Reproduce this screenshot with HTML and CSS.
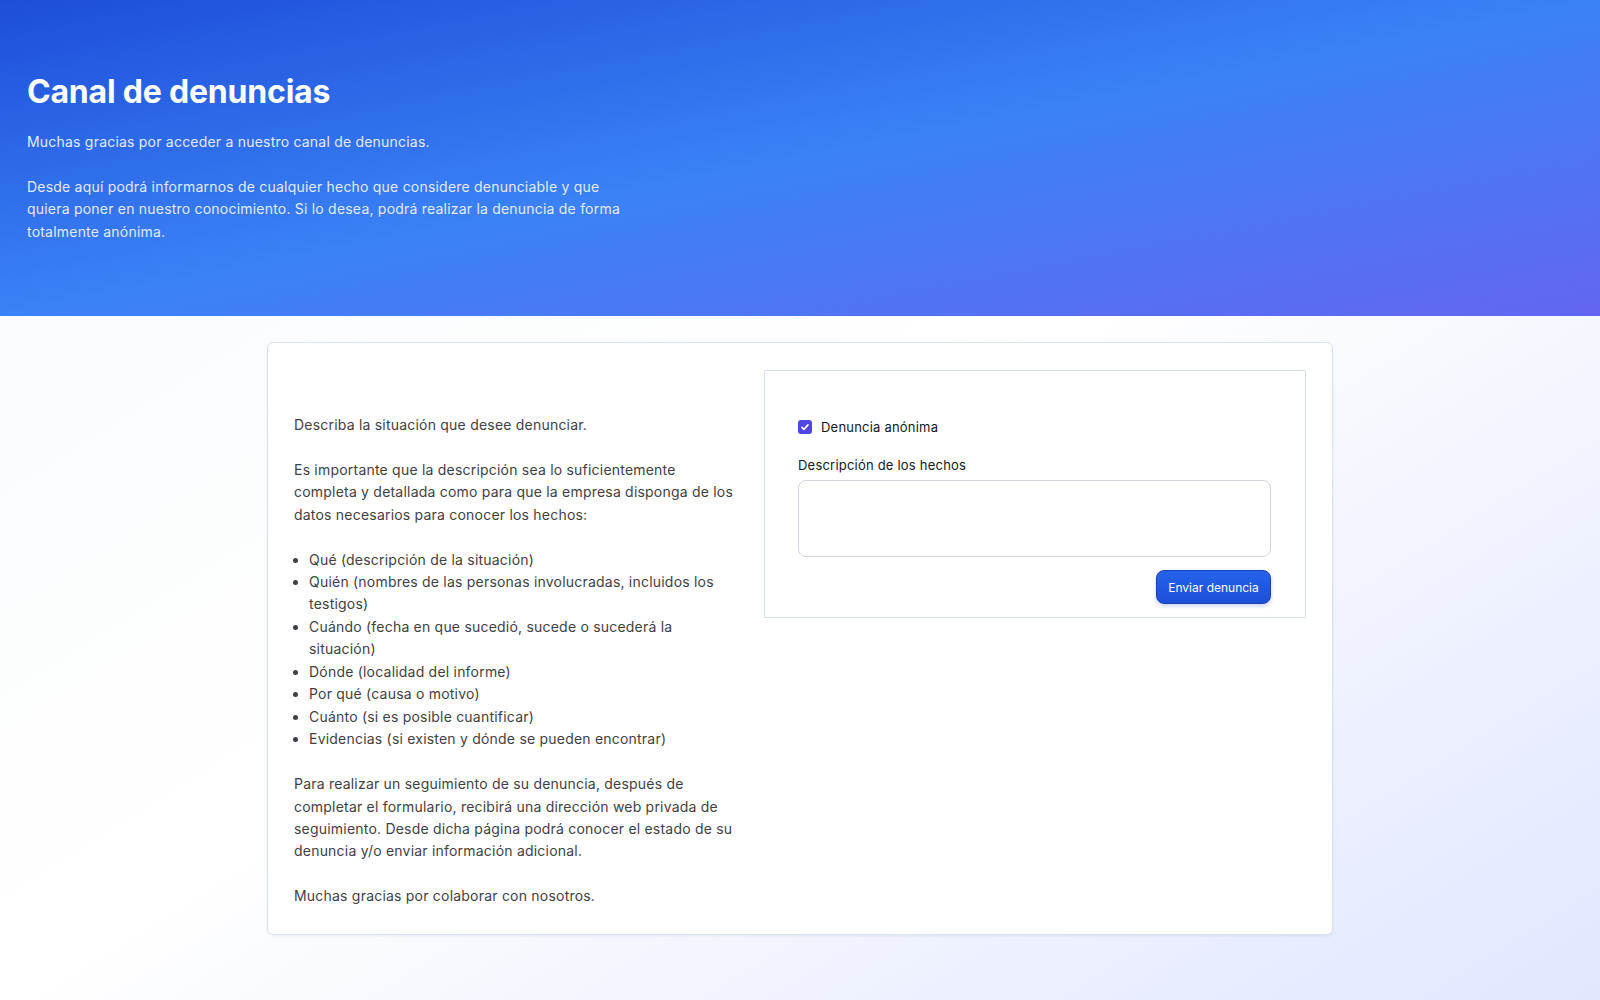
FILE: index.html
```html
<!DOCTYPE html>
<html lang="es">
<head>
<meta charset="utf-8">
<title>Canal de denuncias</title>
<link rel="stylesheet" href="styles.css">
</head>
<body>
<header class="hero">
  <h1 class="hero-title">Canal de denuncias</h1>
  <p class="hero-text">Muchas gracias por acceder a nuestro canal de denuncias.</p>
  <p class="hero-text hero-text--narrow">Desde aquí podrá informarnos de cualquier hecho que considere denunciable y que quiera poner en nuestro conocimiento. Si lo desea, podrá realizar la denuncia de forma totalmente anónima.</p>
</header>
<main class="main">
  <section class="card">
    <div class="intro">
      <p>Describa la situación que desee denunciar.</p>
      <p>Es importante que la descripción sea lo suficientemente completa y detallada como para que la empresa disponga de los datos necesarios para conocer los hechos:</p>
      <ul class="intro-list">
        <li>Qué (descripción de la situación)</li>
        <li>Quién (nombres de las personas involucradas, incluidos los testigos)</li>
        <li>Cuándo (fecha en que sucedió, sucede o sucederá la situación)</li>
        <li>Dónde (localidad del informe)</li>
        <li>Por qué (causa o motivo)</li>
        <li>Cuánto (si es posible cuantificar)</li>
        <li>Evidencias (si existen y dónde se pueden encontrar)</li>
      </ul>
      <p>Para realizar un seguimiento de su denuncia, después de completar el formulario, recibirá una dirección web privada de seguimiento. Desde dicha página podrá conocer el estado de su denuncia y/o enviar información adicional.</p>
      <p>Muchas gracias por colaborar con nosotros.</p>
    </div>
    <form class="form">
      <label class="check-row">
        <span class="check"><svg viewBox="0 0 14 14" width="14" height="14"><path d="M4 7.3l2 2 4-4.4" fill="none" stroke="#fff" stroke-width="1.7" stroke-linecap="round" stroke-linejoin="round"/></svg></span>
        <span class="check-label">Denuncia anónima</span>
      </label>
      <label class="field-label" for="hechos">Descripción de los hechos</label>
      <textarea id="hechos" class="field"></textarea>
      <div class="actions">
        <button type="button" class="btn">Enviar denuncia</button>
      </div>
    </form>
  </section>
</main>
</body>
</html>
```
FILE: styles.css
```css
* { box-sizing: border-box; }
html, body { margin: 0; padding: 0; }
body {
  min-height: 100vh;
  font-family: Inter, "Noto Sans", "Liberation Sans", sans-serif;
  letter-spacing: 0.21px;
  background: linear-gradient(to bottom right, #f8fafc, #ffffff, #e0e7ff);
  color: #374151;
}
.hero {
  height: 316px;
  padding: 73px 27px 0;
  background: linear-gradient(to bottom right, #1d4ed8, #3b82f6, #6366f1);
  color: #fff;
}
.hero-title {
  margin: 0 0 20px;
  font-size: 32px;
  line-height: 38px;
  font-weight: 700;
  letter-spacing: -0.2px;
}
.hero-text {
  margin: 0 0 22.4px;
  font-size: 14px;
  line-height: 22.4px;
  color: #e3eaff;
}
.hero-text--narrow { max-width: 600px; }
.main {
  padding: 26px 0 40px;
}
.card {
  width: 1066px;
  margin: 0 auto;
  padding: 26px;
  background: #fff;
  border: 1px solid #d9e3ef;
  border-radius: 6px;
  box-shadow: 0 1px 3px rgba(30, 41, 99, 0.08);
  display: grid;
  grid-template-columns: 443px 542px;
  column-gap: 27px;
  align-items: start;
}
.intro {
  padding-top: 44.9px;
  font-size: 14px;
  line-height: 22.45px;
  color: #3f3f46;
}
.intro p { margin: 0 0 22.45px; }
.intro p:last-child { margin-bottom: 0; }
.intro-list {
  margin: 0 0 22.45px;
  padding-left: 15px;
}
.form {
  margin-top: 1px;
  border: 1px solid #d5e1ed;
  padding: 46px 34px 13px 33px;
  display: flex;
  flex-direction: column;
}
.check-row {
  display: flex;
  align-items: center;
  gap: 9px;
  font-size: 13px;
  line-height: 20px;
  color: #111827;
}
.check {
  width: 14px;
  height: 14px;
  border-radius: 3px;
  background: #4f46e5;
  display: flex;
}
.field-label {
  margin-top: 18px;
  font-size: 13px;
  line-height: 20px;
  font-weight: 400;
  color: #111827;
}
.field {
  margin-top: 5px;
  height: 77px;
  width: 100%;
  border: 1px solid #d1d5db;
  border-radius: 8px;
  resize: none;
  font: inherit;
  background: #fff;
}
.actions {
  margin-top: 13px;
  display: flex;
  justify-content: flex-end;
}
.btn {
  width: 115px;
  height: 34px;
  padding: 0;
  border: 1px solid #1e40af;
  border-radius: 8px;
  background: linear-gradient(to bottom, #2563eb, #1d4ed8);
  color: #fff;
  font-family: inherit;
  font-size: 12px;
  font-weight: 400;
  letter-spacing: 0;
  box-shadow: 0 2px 4px rgba(29, 78, 216, 0.25);
}
```
